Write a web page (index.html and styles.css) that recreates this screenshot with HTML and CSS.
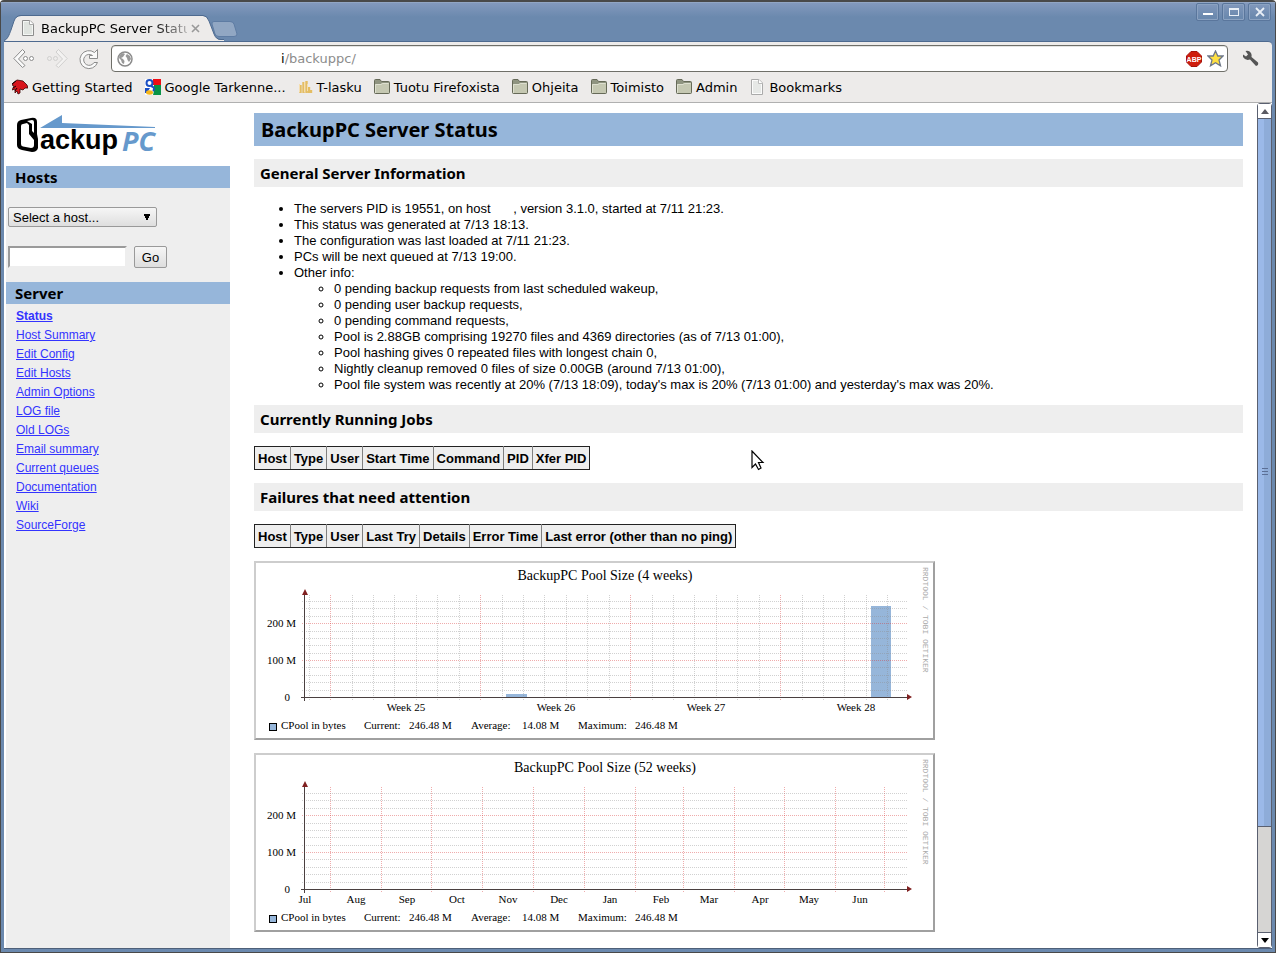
FILE: index.html
```html
<!DOCTYPE html>
<html lang="en">
<head>
<meta charset="utf-8">
<title>BackupPC Server Status</title>
<link rel="stylesheet" href="styles.css">
</head>
<body>
<div class="window">
  <header class="titlebar">
    <div class="tabs">
      <div class="tab">
        <svg class="tab-shape" width="220" height="26" viewBox="0 0 220 26" aria-hidden="true"><path d="M0 26C4 24 5 20 7 15L10 6Q12 1 17 1H199Q203 1 205 6L210 19Q212 25 217 25H220V26Z" fill="#edebea"/><path d="M0 25.500C4 24 5 20 7 15L10 6Q12 .5 17 .5H199Q203 .5 205 6L210 19Q212 24.500 217 24.500H220" fill="none" stroke="#4e6a8f"/></svg>
        <svg class="page-icon" width="16" height="16" viewBox="0 0 16 16" aria-hidden="true"><path d="M2.500 .5H10L13.500 4V15.500H2.500Z" fill="#f4f6f4" stroke="#8d8d8d"/><path d="M4 2h5l3 4v8H4z" fill="#dfe3df"/><path d="M9.500 .5V4.500H13.500" fill="#fff" stroke="#aaa"/></svg>
        <span class="tab-title">BackupPC Server Statu</span>
        <button class="tab-close" aria-label="Close tab"><svg width="9" height="9" viewBox="0 0 9 9"><path d="M1 1l7 7M8 1l-7 7" stroke="#999" stroke-width="1.600"/></svg></button>
      </div>
      <button class="new-tab" aria-label="New tab"><svg width="27" height="16" viewBox="0 0 27 16"><path d="M3 .5H19Q22 .5 23 3L26 13Q26 15.500 23 15.500H8Q5 15.500 4 13L1 3Q.5 .5 3 .5Z" fill="#91a7c3" stroke="#5e7ca3"/></svg></button>
    </div>
    <div class="window-buttons">
      <button aria-label="Minimize"><svg width="12" height="12" viewBox="0 0 12 12"><path d="M1 8h10" stroke="#fff" stroke-width="2"/></svg></button>
      <button aria-label="Maximize"><svg width="12" height="12" viewBox="0 0 12 12"><rect x="1.500" y="2.500" width="9" height="7" fill="none" stroke="#e8eef6"/><path d="M1 3h10" stroke="#e8eef6" stroke-width="2"/></svg></button>
      <button aria-label="Close"><svg width="12" height="12" viewBox="0 0 12 12"><path d="M2 2l8 8M10 2l-8 8" stroke="#e8eef6" stroke-width="1.800"/></svg></button>
    </div>
  </header>

  <div class="chrome">
    <div class="toolbar">
      <button aria-label="Back"><svg width="22" height="22" viewBox="0 0 22 22"><g fill="none" stroke="#8c8c8c"><path d="M9.500 1.500L.8 10.500L9.500 19.500L12 17.500L5.500 11L12 4Z" fill="#fafafa"/><circle cx="12.500" cy="10.500" r="2" fill="#fff"/><circle cx="18.500" cy="10.500" r="2" fill="#fff"/></g></svg></button>
      <button aria-label="Forward"><svg width="22" height="22" viewBox="0 0 22 22"><g fill="none" stroke="#d0cfce"><path d="M12.500 1.500L21.200 10.500L12.500 19.500L10 17.500L16.500 11L10 4Z" fill="#f3f2f1"/><circle cx="3.500" cy="10.500" r="2"/><circle cx="9.500" cy="10.500" r="2"/></g></svg></button>
      <button class="reload" aria-label="Reload"><svg width="22" height="22" viewBox="0 0 22 22"><path d="M19.500 1.500V10.500H11.500V7.500H14.500A5.500 5.500 0 1 0 16 14.500H19.500A9 9 0 1 1 16.500 4.500Z" fill="#fafafa" stroke="#8c8c8c"/></svg></button>
      <div class="address">
        <svg width="16" height="16" viewBox="0 0 16 16" aria-hidden="true"><circle cx="8" cy="8" r="7" fill="#fff" stroke="#8b8b8b" stroke-width="1.500"/><path d="M2.500 4L6 2L8 3L6 6L4 7L6 8L7.500 10L7 13L5 12L4 9L2 7Z" fill="#999"/><path d="M10 3L13 5L14 8L12 11L10.500 9L10 7L8.500 5Z" fill="#999"/></svg>
        <label class="host-end" for="url">i</label><input id="url" type="text" value="/backuppc/">
        <svg width="16" height="16" viewBox="0 0 16 16" role="img" aria-label="Adblock Plus"><path d="M5 .5H11L15.500 5V11L11 15.500H5L.5 11V5Z" fill="#cf1d0c" stroke="#a5130a"/><text x="8" y="11" text-anchor="middle" class="abp">ABP</text></svg>
        <svg class="star" width="17" height="17" viewBox="0 0 17 17" role="img" aria-label="Bookmark"><path d="M8.500 1L10.800 6H16L12 10L13.500 15.800L8.500 12.700L3.500 15.800L5 10L1 6H6.200Z" fill="#ffe042" stroke="#6e7788" stroke-width="1.300"/></svg>
      </div>
      <button class="wrench" aria-label="Settings"><svg width="17" height="17" viewBox="0 0 17 17"><path d="M3.500 1Q7 0 9 3Q10 5 9.500 7L16 12.500Q17 15 14 16L8 9.500Q3.500 11 1 7V4.500L4 6.500L6 4.500Z" fill="#555"/></svg></button>
    </div>
    <nav class="bookmarks">
      <a href="#"><svg width="16" height="16" viewBox="0 0 16 16"><path d="M1 4L5 1L11 2L15 6L16 9L13 9L11 11L8 10L8 14L6 15L5 12L3 14L3 10L0 11L2 7L0 6Z" fill="#d8141c" stroke="#3b0505" stroke-width=".8"/><path d="M0 5L4 2M1 9l3-2M3 12l2-3" stroke="#190000"/></svg>Getting Started</a>
      <a href="#"><svg width="16" height="16" viewBox="0 0 16 16"><path fill="#fff" d="M0 0h16v16H0z"/><path d="M8 0h8v6H8z" fill="#f00d13"/><path d="M9 6h7v10H8l1-4z" fill="#0a9347"/><path d="M0 9h5l-3 5H0z" fill="#1b4fc4"/><circle cx="4.500" cy="4" r="3" fill="none" stroke="#1b4fc4" stroke-width="2"/><path d="M6 7q5 2 2 5" stroke="#1b4fc4" stroke-width="2" fill="none"/><ellipse cx="4.500" cy="13.500" rx="3.500" ry="2.200" fill="#f6b51b"/></svg>Google Tarkenne...</a>
      <a href="#"><svg width="15" height="16" viewBox="0 0 15 16"><path d="M2.500 14V6M5.500 14V3M8.500 14V2M11 14V8M13 14v-3" stroke="#e4bd62" stroke-width="2.400"/><path d="M1.500 13V5M6.500 13V3M9.500 12V5" stroke="#f5deb0"/></svg>T-lasku</a>
      <a href="#"><svg width="16" height="16" viewBox="0 0 16 16"><use href="#folder"/></svg>Tuotu Firefoxista</a>
      <a href="#"><svg width="16" height="16" viewBox="0 0 16 16"><use href="#folder"/></svg>Ohjeita</a>
      <a href="#"><svg width="16" height="16" viewBox="0 0 16 16"><use href="#folder"/></svg>Toimisto</a>
      <a href="#"><svg width="16" height="16" viewBox="0 0 16 16"><use href="#folder"/></svg>Admin</a>
      <a href="#"><svg width="16" height="16" viewBox="0 0 16 16"><path d="M2.500 .5H10L13.500 4V15.500H2.500Z" fill="#fbfbfb" stroke="#aaa"/><path d="M4 2h5l3 4v8H4z" fill="#e6e8e6"/><path d="M9.500 .5V4.500H13.500" fill="#fff" stroke="#bbb"/></svg>Bookmarks</a>
    </nav>
  </div>

  <div class="viewport">
    <aside class="sidebar">
      <div class="logo">
        <svg width="142" height="44" viewBox="0 0 142 44" role="img" aria-label="BackupPC">
          <path d="M24 13L46 0V8L139 12V13Z" fill="#6699cc"/>
          <path fill-rule="evenodd" d="M1 10Q1 6 5 5L15 3Q21 2 21 7V19L22 24V33Q21 37 16 37L6 35Q1 34 1 30ZM5 11V29Q5 31 7 31.500L15 33Q18 33 18 30V25L13 19V10L11 8L7 9Q5 9 5 11ZM11 6L16 9V16L18 18V7Q18 5 16 5Z" fill="#000"/>
          <text x="24" y="34" class="logo-backup">ackup</text>
          <text x="106" y="36" class="logo-pc">PC</text>
        </svg>
      </div>
      <h2>Hosts</h2>
      <form class="host-form">
        <select aria-label="Select a host"><option>Select a host...</option></select>
        <div class="host-search"><input type="text" aria-label="Host name"><button type="button">Go</button></div>
      </form>
      <h2>Server</h2>
      <nav class="server-links">
        <a href="#" class="current">Status</a>
        <a href="#">Host Summary</a>
        <a href="#">Edit Config</a>
        <a href="#">Edit Hosts</a>
        <a href="#">Admin Options</a>
        <a href="#">LOG file</a>
        <a href="#">Old LOGs</a>
        <a href="#">Email summary</a>
        <a href="#">Current queues</a>
        <a href="#">Documentation</a>
        <a href="#">Wiki</a>
        <a href="#">SourceForge</a>
      </nav>
    </aside>

    <main class="content">
      <h1>BackupPC Server Status</h1>
      <h2>General Server Information</h2>
      <ul class="info">
        <li>The servers PID is 19551, on host <span class="host-name"></span>, version 3.1.0, started at 7/11 21:23.</li>
        <li>This status was generated at 7/13 18:13.</li>
        <li>The configuration was last loaded at 7/11 21:23.</li>
        <li>PCs will be next queued at 7/13 19:00.</li>
        <li>Other info:
          <ul>
            <li>0 pending backup requests from last scheduled wakeup,</li>
            <li>0 pending user backup requests,</li>
            <li>0 pending command requests,</li>
            <li>Pool is 2.88GB comprising 19270 files and 4369 directories (as of 7/13 01:00),</li>
            <li>Pool hashing gives 0 repeated files with longest chain 0,</li>
            <li>Nightly cleanup removed 0 files of size 0.00GB (around 7/13 01:00),</li>
            <li>Pool file system was recently at 20% (7/13 18:09), today's max is 20% (7/13 01:00) and yesterday's max was 20%.</li>
          </ul>
        </li>
      </ul>
      <h2>Currently Running Jobs</h2>
      <table>
        <tr><th>Host</th><th>Type</th><th>User</th><th>Start Time</th><th>Command</th><th>PID</th><th>Xfer PID</th></tr>
      </table>
      <h2>Failures that need attention</h2>
      <table>
        <tr><th>Host</th><th>Type</th><th>User</th><th>Last Try</th><th>Details</th><th>Error Time</th><th>Last error (other than no ping)</th></tr>
      </table>

      <svg class="graph" width="677" height="175" viewBox="0 0 677 175" role="img" aria-label="BackupPC Pool Size, 4 weeks">
        <text class="graph-title" x="349" y="17">BackupPC Pool Size (4 weeks)</text>
        <path class="bar" d="M250 131h21v3h-21zM615 43h20v91h-20z"/>
        <path class="minor" d="M53.500 32v106M96.500 32v106M117.500 32v106M138.500 32v106M160.500 32v106M181.500 32v106M203.500 32v106M246.500 32v106M267.500 32v106M288.500 32v106M310.500 32v106M331.500 32v106M353.500 32v106M396.500 32v106M417.500 32v106M438.500 32v106M460.500 32v106M481.500 32v106M503.500 32v106M546.500 32v106M567.500 32v106M588.500 32v106M610.500 32v106M631.500 32v106"/>
        <path class="major" d="M74.500 32v106M224.500 32v106M374.500 32v106M524.500 32v106"/>
        <use href="#axes"/>
        <g class="centered">
          <text x="150" y="148">Week 25</text><text x="300" y="148">Week 26</text><text x="450" y="148">Week 27</text><text x="600" y="148">Week 28</text>
        </g>
        <use href="#legend"/>
      </svg>

      <svg class="graph" width="677" height="175" viewBox="0 0 677 175" role="img" aria-label="BackupPC Pool Size, 52 weeks">
        <defs>
          <g id="folder"><path d="M.5 1.500Q.5 .5 1.500 .5H6L7.500 2.500H14.500Q15.500 2.500 15.500 3.500V13.500Q15.500 14.500 14.500 14.500H1.500Q.5 14.500 .5 13.500Z" fill="#8f9480" stroke="#666a58"/><path d="M1 5H7L8 4H15V14H1Z" fill="#c5c8b2"/><path d="M1.500 14V5.500H7L8.500 4.500H14.500" fill="none" stroke="#dddfcf"/></g>
          <g id="axes">
            <path class="minor" d="M46 38.500h605M46 45.500h605M46 53.500h605M46 68.500h605M46 75.500h605M46 82.500h605M46 90.500h605M46 104.500h605M46 112.500h605M46 119.500h605M46 127.500h605"/>
            <path class="major" d="M46 60.500h605M46 97.500h605"/>
            <path class="axis" d="M48.500 32v106M45 134.500h607"/>
            <path class="arrow" d="M46 32l3-6 3 6zM651 131l5 3-5 3z"/>
            <g class="ylabels"><text x="40" y="64">200 M</text><text x="40" y="101">100 M</text><text x="34" y="138">0</text></g>
          </g>
          <g id="legend">
            <rect class="bar swatch" x="13.500" y="160.500" width="7" height="7"/>
            <text x="25" y="166">CPool in bytes</text><text x="108" y="166">Current:</text><text x="153" y="166">246.48 M</text>
            <text x="215" y="166">Average:</text><text x="266" y="166">14.08 M</text>
            <text x="322" y="166">Maximum:</text><text x="379" y="166">246.48 M</text>
            <text class="credit" transform="translate(667 4) rotate(90)">RRDTOOL / TOBI OETIKER</text>
          </g>
        </defs>
        <text class="graph-title" x="349" y="17">BackupPC Pool Size (52 weeks)</text>
        <path class="major" d="M74.500 32v106M125.500 32v106M175.500 32v106M226.500 32v106M277.500 32v106M328.500 32v106M379.500 32v106M427.500 32v106M478.500 32v106M528.500 32v106M579.500 32v106M628.500 32v106"/>
        <use href="#axes"/>
        <g class="centered">
          <text x="49" y="148">Jul</text><text x="100" y="148">Aug</text><text x="151" y="148">Sep</text><text x="201" y="148">Oct</text><text x="252" y="148">Nov</text><text x="303" y="148">Dec</text><text x="354" y="148">Jan</text><text x="405" y="148">Feb</text><text x="453" y="148">Mar</text><text x="504" y="148">Apr</text><text x="553" y="148">May</text><text x="604" y="148">Jun</text>
        </g>
        <use href="#legend"/>
      </svg>
    </main>

    <div class="scrollbar">
      <button aria-label="Scroll up"><svg width="8" height="5" viewBox="0 0 8 5"><path d="M0 5l4-5 4 5z" fill="#5a5a62"/></svg></button>
      <div class="thumb"><svg width="6" height="8" viewBox="0 0 6 8"><path d="M0 .5h6M0 3.500h6M0 6.500h6" stroke="#5b6f96"/></svg></div>
      <div class="track"></div>
      <button aria-label="Scroll down"><svg width="8" height="5" viewBox="0 0 8 5"><path d="M0 0h8l-4 5z" fill="#000"/></svg></button>
    </div>
    <svg class="pointer" width="14" height="21" viewBox="0 0 14 21" aria-hidden="true"><path d="M1 1V17.500L4.500 14L7.500 19.500L10 18L7.500 12.500H12Z" fill="#fff" stroke="#000" stroke-width="1.200"/></svg>
  </div>
</div>
</body>
</html>
```
FILE: styles.css
```css
* { box-sizing: border-box; }

body {
  margin: 0;
  font-family: "Liberation Sans", Arial, sans-serif;
  font-size: 13px;
  color: #000;
}

button {
  border: 0;
  padding: 0;
  background: none;
  font: inherit;
}

svg { display: block; flex: none; }

.window {
  height: 100vh;
  display: flex;
  flex-direction: column;
  padding: 0 3px 3px;
  background: #6b89ae;
  border: 1px solid #494949;
  border-top-width: 2px;
  border-radius: 4px 4px 0 0;
}

/* Title bar and tabs */
.titlebar {
  flex: none;
  height: 39px;
  margin: 0 -3px;
  padding: 0 4px 0 3px;
  display: flex;
  justify-content: space-between;
  background: linear-gradient(#8399bd, #6b89ae 14px);
  border-top: 1px solid #92a6c4;
  font-family: "DejaVu Sans", sans-serif;
}

.tabs { display: flex; align-items: flex-end; }

.tab {
  position: relative;
  width: 211px;
  height: 26px;
  display: flex;
  align-items: center;
  padding-left: 16px;
}

.tab-shape { position: absolute; left: 0; bottom: 0; }
.page-icon, .tab-title, .tab-close { position: relative; }

.tab-title {
  width: 146px;
  margin: 0 4px 0 5px;
  white-space: nowrap;
  -webkit-mask-image: linear-gradient(90deg, #000 112px, #0004);
  mask-image: linear-gradient(90deg, #000 112px, #0004);
}

.new-tab { padding-bottom: 4px; margin-left: -4px; }

.window-buttons { display: flex; gap: 3px; }

.window-buttons button {
  width: 23px;
  height: 18px;
  display: grid;
  place-items: center;
  border: 1px solid #5a769c;
  border-radius: 2px;
  box-shadow: inset 0 0 0 1px #8ba2c1;
}

/* Toolbar */
.chrome {
  flex: none;
  padding-top: 3px;
  background: #edebea;
  border-top: 1px solid #4e6a8f;
  border-bottom: 1px solid #b0b0b0;
  border-top-right-radius: 4px;
  font-family: "DejaVu Sans", sans-serif;
}

.toolbar {
  display: flex;
  align-items: center;
  padding-left: 9px;
  padding-right: 13px;
  gap: 11px;
}

.reload { margin-left: -1px; }

.address {
  flex: 1;
  height: 27px;
  display: flex;
  align-items: center;
  padding: 0 3px 0 5px;
  background: #fff;
  border: 1px solid #6f6f69;
  border-radius: 4px;
  box-shadow: inset 0 1px #e4e4e2;
}

.host-end { margin-left: 148px; }

.address input {
  flex: 1;
  min-width: 0;
  padding: 0;
  border: 0;
  outline: 0;
  background: none;
  font: inherit;
  color: #8c8c8c;
}

.star { margin-left: 5px; }
.wrench { margin-left: 3px; }

.abp {
  font: bold 7px "Liberation Sans", sans-serif;
  fill: #fff;
}

.bookmarks {
  height: 30px;
  display: flex;
  align-items: center;
  gap: 12px;
  padding-left: 8px;
}

.bookmarks a {
  display: flex;
  align-items: center;
  gap: 4px;
  white-space: nowrap;
  color: #000;
  text-decoration: none;
}

/* Page area */
.viewport {
  position: relative;
  flex: 1;
  min-height: 0;
  display: flex;
  overflow: hidden;
  background: #fff;
  border-bottom: 1px solid #4e6079;
}

h1, h2 {
  margin: 0;
  font-family: "Trebuchet MS", "Noto Sans", sans-serif;
  font-weight: bold;
}

.sidebar {
  flex: none;
  width: 224px;
  margin-left: 2px;
  background: #eee;
}

.logo {
  height: 63px;
  padding: 12px 0 0 10px;
  background: #fff;
}

.logo-backup { font: bold 27px "Liberation Sans", sans-serif; }
.logo-pc { font: italic bold 27px "Noto Sans", sans-serif; fill: #6699cc; }

.sidebar h2 {
  padding-left: 9px;
  font-size: 15px;
  line-height: 22px;
  background: #96b6da;
}

.host-form { padding: 19px 2px 14px; }

.host-form select {
  display: block;
  width: 149px;
  height: 20px;
  padding: 0 4px;
  appearance: none;
  border: 1px solid #999;
  border-radius: 2px;
  font: inherit;
  color: #000;
  background:
    conic-gradient(from -27deg at 50% 100%, #000 54deg, transparent 0) right 5px center / 8px 7px no-repeat,
    linear-gradient(#f6f6f6, #dedede);
}

.host-search { display: flex; gap: 7px; margin-top: 19px; }

.host-search input {
  width: 119px;
  height: 22px;
  border: 2px solid #9a9a9a;
  border-right-color: #eee;
  border-bottom-color: #eee;
  background: #fff;
}

.host-search button {
  width: 33px;
  height: 22px;
  border: 1px solid #999;
  border-radius: 2px;
  background: linear-gradient(#f6f6f6, #dedede);
}

.server-links {
  display: flex;
  flex-direction: column;
  align-items: flex-start;
  padding: 3px 10px;
}

.server-links a { font-size: 12px; line-height: 19px; color: #33f; }
.server-links .current { font-weight: bold; }

.content {
  flex: 1;
  min-width: 0;
  padding: 10px 14px 0 24px;
}

.content h1 {
  padding-left: 7px;
  margin-bottom: 13px;
  font-size: 20px;
  line-height: 33px;
  background: #96b6da;
}

.content h2 {
  padding-left: 6px;
  margin-bottom: 13px;
  font-size: 15px;
  line-height: 28px;
  background: #eee;
}

.info { margin: 14px 0 12px; }
ul { padding-left: 40px; margin: 0; line-height: 16px; }

.host-name { display: inline-block; width: 19px; }

table {
  margin-bottom: 13px;
  border-collapse: collapse;
  border: 1px solid #222;
}

th {
  height: 23px;
  padding: 0 3px;
  background: #eee;
  border: 1px solid #808080;
  border-top-color: #222;
  border-bottom-color: #222;
}

th:first-child { border-left-color: #222; }
th:last-child { border-right-color: #222; }

/* Pool graphs */
.graph {
  box-sizing: content-box;
  margin-bottom: 13px;
  border: 2px solid #cdcdcd;
  border-right-color: #a0a0a0;
  border-bottom-color: #a0a0a0;
  font: 11px "Liberation Serif", "Times New Roman", serif;
  shape-rendering: crispEdges;
}

.graph-title { font-size: 14px; text-anchor: middle; }
.centered { text-anchor: middle; }
.ylabels { text-anchor: end; }
.bar { fill: #96b6da; }
.swatch { stroke: #000; }
.minor { stroke: #8c8c8c; stroke-opacity: .4; stroke-dasharray: 1 1; }
.major { stroke: #d83030; stroke-opacity: .4; stroke-dasharray: 1 1; }
.axis { stroke: #4a4040; }
.arrow { fill: #802020; shape-rendering: auto; }
.credit { font: 8px "Liberation Mono", monospace; fill: #aaa; }

/* Scrollbar */
.scrollbar {
  flex: none;
  width: 15px;
  display: flex;
  flex-direction: column;
  border: 1px solid #5a6070;
  border-radius: 3px;
}

.scrollbar button {
  flex: none;
  height: 14px;
  display: grid;
  place-items: center;
  background: #fff;
}

.thumb {
  flex: 710;
  display: grid;
  place-items: center;
  background: linear-gradient(90deg, #9bb9e8 50%, #8eacd8 50%);
  border: solid #5a6070;
  border-width: 1px 0;
}

.track { flex: 106; background: #d6d5d3; border-bottom: 1px solid #5a6070; }

.pointer { position: absolute; left: 747px; top: 347px; }
```
